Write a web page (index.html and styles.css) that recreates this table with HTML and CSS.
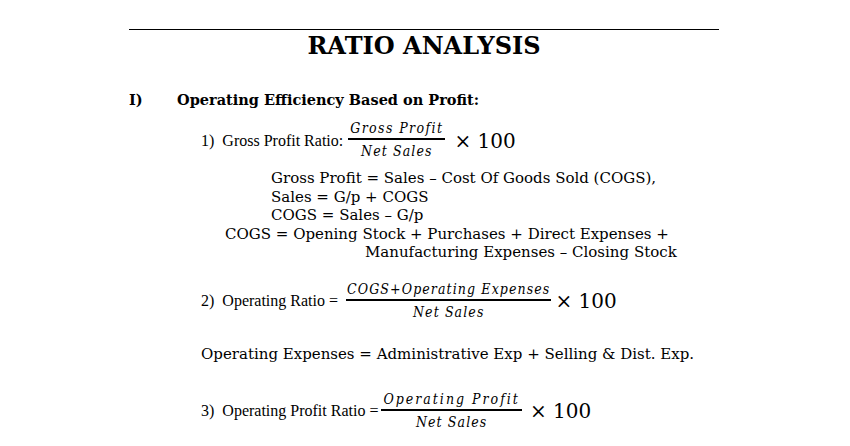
FILE: index.html
```html
<!DOCTYPE html>
<html>
<head>
<meta charset="utf-8">
<link rel="stylesheet" href="styles.css">
</head>
<body>
<div class="page">
  <div class="rule"></div>
  <h1 class="title">RATIO ANALYSIS</h1>
  <div class="heading"><span class="roman">I)</span><span class="htext">Operating Efficiency Based on Profit:</span></div>

  <div class="formula f1">
    <span class="label">1)&nbsp; Gross Profit Ratio:</span>
    <span class="frac"><span class="num">Gross Profit</span><span class="den">Net Sales</span></span>
    <span class="times">× 100</span>
  </div>

  <div class="notes">
    <div class="n1">Gross Profit = Sales – Cost Of Goods Sold (COGS),</div>
    <div class="n1">Sales = G/p + COGS</div>
    <div class="n1">COGS = Sales – G/p</div>
    <div class="n2">COGS = Opening Stock + Purchases + Direct Expenses +</div>
    <div class="n3">Manufacturing Expenses – Closing Stock</div>
  </div>

  <div class="formula f2">
    <span class="label">2)&nbsp; Operating Ratio =</span>
    <span class="frac"><span class="num">COGS+Operating Expenses</span><span class="den">Net Sales</span></span>
    <span class="times">× 100</span>
  </div>

  <div class="opex">Operating Expenses = Administrative Exp + Selling &amp; Dist. Exp.</div>

  <div class="formula f3">
    <span class="label">3)&nbsp; Operating Profit Ratio =</span>
    <span class="frac"><span class="num">Operating Profit</span><span class="den">Net Sales</span></span>
    <span class="times">× 100</span>
  </div>
</div>
</body>
</html>
```
FILE: styles.css
```css
html, body { margin: 0; padding: 0; background: #fff; color: #000; }
body { width: 850px; height: 446px; overflow: hidden; }
.page { margin-left: 129px; width: 590px; padding-top: 29px; }
.rule { border-top: 1px solid #000; }
.title {
  margin: 1px 0 0 0;
  text-align: center;
  font-family: "DejaVu Serif", serif;
  font-weight: bold;
  font-size: 24px;
  line-height: 30px;
}
.heading {
  display: flex;
  margin-top: 30px;
  font-family: "DejaVu Serif", serif;
  font-weight: bold;
  font-size: 14.5px;
  line-height: 18px;
}
.roman { width: 48px; }
.formula {
  display: flex;
  align-items: center;
  margin-left: 72px;
  font-family: "Liberation Serif", serif;
  font-size: 16px;
}
.f1 { margin-top: 11px; }
.frac {
  display: inline-flex;
  flex-direction: column;
  align-items: center;
  font-family: "DejaVu Serif Condensed", "DejaVu Serif", serif;
  font-style: italic;
  font-size: 14px;
}
.num { border-bottom: 2px solid #000; line-height: 17px; padding-bottom: 1px; }
.den { padding-top: 1px; line-height: 20px; letter-spacing: 1.1px; }
.times {
  font-family: "DejaVu Serif", serif;
  font-size: 20px;
  line-height: 24px;
}
.f1 .label { margin-right: 5px; }
.f1 .num { letter-spacing: 1.4px; padding-left: 2px; padding-right: 2px; }
.f1 .times { margin-left: 9px; }
.f2 .label { margin-right: 8px; }
.f2 .num { letter-spacing: 1.1px; padding-left: 1px; padding-right: 1px; }
.f2 .times { margin-left: 4px; }
.f3 .label { margin-right: 3px; }
.f3 .num { letter-spacing: 2px; padding-left: 2px; padding-right: 2px; }
.f3 .times { margin-left: 8px; }
.notes {
  margin-top: 8px;
  font-family: "DejaVu Serif", serif;
  font-size: 15px;
  line-height: 18.5px;
}
.n1 { margin-left: 142px; }
.n2 { margin-left: 96px; }
.n3 { margin-left: 236px; }
.f2 { margin-top: 19px; }
.opex {
  margin-top: 23px;
  margin-left: 72px;
  font-family: "DejaVu Serif", serif;
  font-size: 15px;
  line-height: 18px;
}
.f3 { margin-top: 28px; }
```
